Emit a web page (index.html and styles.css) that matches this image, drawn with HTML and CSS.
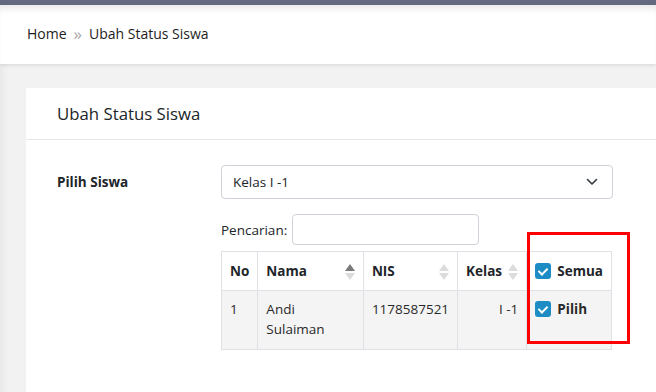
FILE: index.html
```html
<!DOCTYPE html>
<html lang="id">
<head>
  <meta charset="UTF-8">
  <title>Ubah Status Siswa</title>
  <link rel="stylesheet" href="styles.css">
</head>
<body>
  <div class="topbar"></div>
  <div class="breadcrumb">
    <span>Home</span>
    <span class="sep">&raquo;</span>
    <span>Ubah Status Siswa</span>
  </div>

  <div class="content">
    <div class="card">
      <div class="card-header">Ubah Status Siswa</div>
      <div class="card-body">
        <div class="form-row">
          <label class="form-label">Pilih Siswa</label>
          <div class="form-field">
            <div class="select">
              <span>Kelas I -1</span>
              <svg width="12" height="8" viewBox="0 0 12 8"><path d="M1.5 1.5 L6 6 L10.5 1.5" fill="none" stroke="#343a40" stroke-width="1.6" stroke-linecap="round" stroke-linejoin="round"/></svg>
            </div>

            <div class="search">
              <label>Pencarian:</label>
              <input type="text">
            </div>

            <div class="table-wrap">
              <table class="data">
                <thead>
                  <tr>
                    <th class="c-no">No</th>
                    <th class="c-nama sortable"><span>Nama</span><i class="sort asc"></i></th>
                    <th class="c-nis sortable"><span>NIS</span><i class="sort"></i></th>
                    <th class="c-kelas sortable"><span>Kelas</span><i class="sort"></i></th>
                    <th class="c-check"><span class="check"></span>Semua</th>
                  </tr>
                </thead>
                <tbody>
                  <tr>
                    <td>1</td>
                    <td>Andi<br>Sulaiman</td>
                    <td>1178587521</td>
                    <td class="right">I -1</td>
                    <td class="bold"><span class="check"></span>Pilih</td>
                  </tr>
                </tbody>
              </table>
              <div class="highlight"></div>
            </div>
          </div>
        </div>
      </div>
    </div>
  </div>
</body>
</html>
```

FILE: styles.css
```css
* { box-sizing: border-box; margin: 0; padding: 0 }
html, body { height: 100%; overflow: hidden }
body {
  background: #f2f2f2;
  color: #212529;
  font-family: "Open Sans", "Noto Sans", sans-serif;
  font-size: 13.5px;
}
.topbar {
  height: 5px;
  background: #636a80;
}
.breadcrumb {
  height: 59px;
  background: #fff;
  display: flex;
  align-items: center;
  gap: 7px;
  padding: 0 0 2px 27px;
  font-size: 14px;
  color: #1d1d1d;
  box-shadow: inset 0 8px 10px -6px rgba(0,0,0,0.12), 0 2px 3px rgba(0,0,0,0.08);
}
.breadcrumb .sep { color: #a8a8a8; font-size: 17px; line-height: 1 }
.content {
  height: calc(100% - 64px);
  padding: 24px 0 0 26px;
  box-shadow: inset 8px 0 8px -6px rgba(0,0,0,0.06);
}
.card {
  height: 100%;
  background: #fff;
}
.card-header {
  height: 52px;
  padding: 0 31px;
  display: flex;
  align-items: center;
  font-size: 16.8px;
  color: #212529;
  border-bottom: 1px solid #e6e6e6;
}
.card-body {
  padding: 25px 0 0 31px;
}
.form-row {
  display: flex;
}
.form-label {
  width: 164px;
  font-weight: 700;
  padding-top: 8px;
}
.form-field {
  width: 392px;
}
.select {
  height: 34px;
  border: 1px solid #ced4da;
  border-radius: 4px;
  display: flex;
  align-items: center;
  justify-content: space-between;
  padding: 0 14px 0 11px;
}
.search {
  margin-top: 15px;
  display: flex;
  align-items: center;
  gap: 5px;
}
.search input {
  width: 187px;
  height: 31px;
  border: 1px solid #ced4da;
  border-radius: 4px;
}
.table-wrap {
  position: relative;
  margin-top: 6px;
}
.data {
  width: 391px;
  border-collapse: collapse;
}
.data th, .data td {
  border: 1px solid #dee2e6;
  text-align: left;
  vertical-align: top;
  white-space: nowrap;
}
.data th {
  height: 39px;
  vertical-align: middle;
  font-weight: 700;
  padding: 0 8px;
  position: relative;
}
.data td {
  padding: 8px 8px 10px;
  line-height: 20px;
  background: #f4f4f4;
  color: #2a2a2a;
}
.c-no { width: 36px }
.c-nama { width: 107px }
.c-nis { width: 94px }
.c-kelas { width: 70px }
.data td.right { text-align: right }
.data td.bold { font-weight: 700 }
.sort {
  position: absolute;
  right: 8px;
  top: 12px;
  width: 10px;
  height: 16px;
}
.sort::before, .sort::after {
  content: "";
  position: absolute;
  left: 0;
  border-left: 5px solid transparent;
  border-right: 5px solid transparent;
}
.sort::before { top: 0; border-bottom: 7px solid #dcdcdc }
.sort::after { bottom: 0; border-top: 7px solid #dcdcdc }
.sort.asc::before { border-bottom-color: #7a7a7a }
.check {
  display: inline-block;
  width: 16px;
  height: 16px;
  border-radius: 3px;
  background: #1d8cc4;
  vertical-align: -3px;
  margin-right: 6px;
  position: relative;
}
.check::after {
  content: "";
  position: absolute;
  left: 5px;
  top: 3px;
  width: 4px;
  height: 7px;
  border: solid #fff;
  border-width: 0 2px 2px 0;
  transform: rotate(45deg);
}
.highlight {
  position: absolute;
  left: 306px;
  top: -19px;
  width: 103px;
  height: 112px;
  border: 3px solid #f00;
}
```
